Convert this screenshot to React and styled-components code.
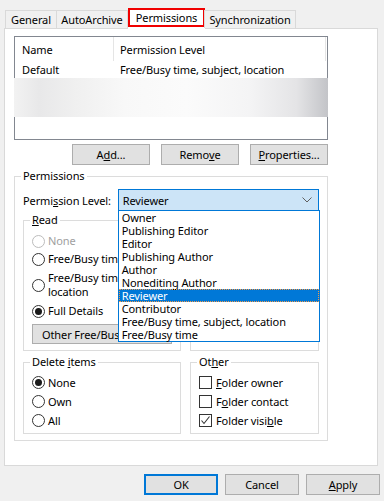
import React from "react";
import styled, { createGlobalStyle } from "styled-components";

const GlobalStyle = createGlobalStyle`
  html, body {
    margin: 0;
    background: #f0f0f0;
  }
  body {
    font-family: "Noto Sans", "Open Sans", sans-serif;
    font-size: 11px;
    letter-spacing: -0.1px;
    color: #000;
  }
`;

const Dialog = styled.div`
  width: 384px;
  height: 501px;
  box-sizing: border-box;
  padding-top: 8px;
`;

const TabStrip = styled.div`
  display: flex;
  align-items: flex-end;
  height: 20px;
  padding-left: 6px;
  position: relative;
  z-index: 1;
`;

const Tab = styled.div`
  width: ${({ $w }) => $w}px;
  height: 18px;
  box-sizing: border-box;
  margin-left: -1px;
  border: 1px solid #d9d9d9;
  border-bottom: none;
  background: #f0f0f0;
  display: flex;
  align-items: center;
  justify-content: center;
  white-space: nowrap;
`;

const ActiveTab = styled.div`
  width: 77px;
  height: 21px;
  margin-bottom: -1px;
  background: #fff;
  display: flex;
  flex-direction: column;
`;

const Highlight = styled.div`
  height: 19px;
  box-sizing: border-box;
  border: 2px solid #f00000;
  display: flex;
  align-items: center;
  justify-content: center;
  padding-bottom: 1px;
`;

const Panel = styled.div`
  margin-left: 4px;
  width: 374px;
  height: 438px;
  box-sizing: border-box;
  background: #fff;
  border: 1px solid #d9d9d9;
  padding: 7px 0 0 9px;
`;

const ListView = styled.div`
  width: 314px;
  height: 104px;
  box-sizing: border-box;
  border: 1px solid #828790;
  background: #fff;
`;

const ListHeader = styled.div`
  display: flex;
  height: 24px;
`;

const HeaderCell = styled.div`
  width: ${({ $w }) => $w}px;
  box-sizing: border-box;
  padding-left: ${({ $pad }) => $pad}px;
  border-right: 1px solid #e5e5e5;
  display: flex;
  align-items: center;
`;

const ListRow = styled.div`
  display: flex;
  height: 17px;
  align-items: center;
`;

const Cell = styled.div`
  width: ${({ $w }) => $w}px;
  padding-left: ${({ $pad }) => $pad}px;
  box-sizing: border-box;
  white-space: nowrap;
`;

const Redacted = styled.div`
  height: 39px;
  margin: 0 -1px;
  background: linear-gradient(
    90deg,
    #f2f2f2 0%,
    #e8e8e9 8%,
    #f0f0f0 20%,
    #f8f8f8 35%,
    #fbfbfb 55%,
    #f4f4f5 75%,
    #e4e4e6 90%,
    #c3c4c8 100%
  );
`;

const ButtonRow = styled.div`
  display: flex;
  justify-content: flex-end;
  gap: ${({ $gap }) => $gap}px;
  width: ${({ $w }) => ($w ? `${$w}px` : "auto")};
  margin-top: ${({ $top }) => $top}px;
  padding-right: ${({ $right }) => $right || 0}px;
`;

const Button = styled.button`
  width: ${({ $w }) => $w}px;
  height: ${({ $h }) => $h || 21}px;
  box-sizing: border-box;
  border: ${({ $default }) =>
    $default ? "2px solid #0078d7" : "1px solid #adadad"};
  background: #e1e1e1;
  font: inherit;
  letter-spacing: inherit;
  color: #000;
  padding: 0;
  display: flex;
  align-items: center;
  justify-content: center;
  white-space: nowrap;
`;

const OtherButton = styled(Button)`
  justify-content: flex-start;
  padding-left: 9px;
  margin-top: 4px;
`;

const U = styled.span`
  text-decoration: underline;
  text-underline-offset: 1px;
`;

const Group = styled.fieldset`
  margin: ${({ $top }) => $top || 0}px 0 0;
  padding: ${({ $pt }) => $pt || 0}px 8px ${({ $pb }) => $pb}px;
  border: 1px solid #dcdcdc;
  box-sizing: border-box;
  min-width: 0;
  width: ${({ $w }) => ($w ? `${$w}px` : "auto")};
`;

const Legend = styled.legend`
  padding: 0 2px;
  margin-left: -2px;
  line-height: 16px;
  white-space: nowrap;
`;

const LevelRow = styled.div`
  display: flex;
  align-items: center;
  height: 22px;
`;

const LevelLabel = styled.div`
  width: 95px;
  white-space: nowrap;
`;

const Combo = styled.div`
  position: relative;
  width: 202px;
  height: 22px;
  box-sizing: border-box;
  border: 1px solid #0078d7;
  background: #cce4f7;
  display: flex;
  align-items: center;
  justify-content: space-between;
  padding: 0 6px 0 4px;
`;

const DropList = styled.div`
  position: absolute;
  top: 20px;
  left: -1px;
  width: 202px;
  box-sizing: border-box;
  border: 1px solid #0078d7;
  background: #fff;
  z-index: 5;
`;

const DropItem = styled.div`
  height: 13px;
  line-height: 13px;
  padding-left: 3px;
  box-sizing: border-box;
  white-space: nowrap;
  background: ${({ $selected }) => ($selected ? "#0078d7" : "transparent")};
  color: ${({ $selected }) => ($selected ? "#fff" : "#000")};
  outline: ${({ $selected }) => ($selected ? "1px dotted #f29a4a" : "none")};
  outline-offset: -1px;
`;

const GroupGrid = styled.div`
  display: grid;
  grid-template-columns: 158px 129px;
  column-gap: 9px;
  row-gap: 3px;
  margin-top: 1px;
`;

const OptionRow = styled.div`
  display: flex;
  align-items: center;
  min-height: ${({ $h }) => $h}px;
  margin-top: ${({ $top }) => $top}px;
  line-height: 14px;
  color: ${({ $disabled }) => ($disabled ? "#a0a0a0" : "#000")};
  white-space: nowrap;
`;

const Radio = styled.span`
  flex: none;
  width: 13px;
  height: 13px;
  box-sizing: border-box;
  border-radius: 50%;
  border: 1px solid ${({ $disabled }) => ($disabled ? "#bcbcbc" : "#333")};
  margin-right: 3px;
  display: flex;
  align-items: center;
  justify-content: center;
  &::after {
    content: "";
    width: 7px;
    height: 7px;
    border-radius: 50%;
    background: #1a1a1a;
    display: ${({ $checked }) => ($checked ? "block" : "none")};
  }
`;

const Check = styled.span`
  flex: none;
  width: 13px;
  height: 13px;
  box-sizing: border-box;
  border: 1px solid #333;
  margin-right: 4px;
  display: flex;
  align-items: center;
  justify-content: center;
`;

const levels = [
  "Owner",
  "Publishing Editor",
  "Editor",
  "Publishing Author",
  "Author",
  "Nonediting Author",
  "Reviewer",
  "Contributor",
  "Free/Busy time, subject, location",
  "Free/Busy time",
];

function Chevron() {
  return (
    <svg width="10" height="6" viewBox="0 0 10 6">
      <polyline
        points="0.5,0.5 5,5 9.5,0.5"
        fill="none"
        stroke="#5f5f5f"
        strokeWidth="1"
      />
    </svg>
  );
}

function CheckMark() {
  return (
    <svg width="11" height="11" viewBox="0 0 11 11">
      <polyline
        points="1.5,5.5 4,8.5 9.5,1.5"
        fill="none"
        stroke="#333"
        strokeWidth="1.1"
      />
    </svg>
  );
}

function App() {
  return (
    <Dialog>
      <GlobalStyle />
      <TabStrip>
        <Tab $w={52}>General</Tab>
        <Tab $w={72}>AutoArchive</Tab>
        <ActiveTab>
          <Highlight>Permissions</Highlight>
        </ActiveTab>
        <Tab $w={92}>Synchronization</Tab>
      </TabStrip>
      <Panel>
        <ListView>
          <ListHeader>
            <HeaderCell $w={99} $pad={7}>
              Name
            </HeaderCell>
            <HeaderCell $w={212} $pad={6}>
              Permission Level
            </HeaderCell>
          </ListHeader>
          <ListRow>
            <Cell $w={99} $pad={7}>
              Default
            </Cell>
            <Cell $w={212} $pad={6}>
              Free/Busy time, subject, location
            </Cell>
          </ListRow>
          <Redacted />
        </ListView>
        <ButtonRow $gap={11} $w={314} $top={4}>
          <Button $w={78}>
            A<U>d</U>d...
          </Button>
          <Button $w={78}>
            Remo<U>v</U>e
          </Button>
          <Button $w={78}>
            <U>P</U>roperties...
          </Button>
        </ButtonRow>
        <Group $w={314} $top={3} $pt={5} $pb={6}>
          <Legend>Permissions</Legend>
          <LevelRow>
            <LevelLabel>
              Permi<U>s</U>sion Level:
            </LevelLabel>
            <Combo>
              <span>Reviewer</span>
              <Chevron />
              <DropList>
                {levels.map((level) => (
                  <DropItem key={level} $selected={level === "Reviewer"}>
                    {level}
                  </DropItem>
                ))}
              </DropList>
            </Combo>
          </LevelRow>
          <GroupGrid>
            <Group $pb={6}>
              <Legend>
                <U>R</U>ead
              </Legend>
              <OptionRow $h={18} $top={4} $disabled>
                <Radio $disabled />
                None
              </OptionRow>
              <OptionRow $h={18} $top={0}>
                <Radio />
                Free/Busy time
              </OptionRow>
              <OptionRow $h={28} $top={3}>
                <Radio />
                <span>
                  Free/Busy time, subject,
                  <br />
                  location
                </span>
              </OptionRow>
              <OptionRow $h={18} $top={3}>
                <Radio $checked />
                Full Details
              </OptionRow>
              <OtherButton $w={140} $h={20}>
                Other Free/Busy...
              </OtherButton>
            </Group>
            <Group $pb={6}>
              <Legend>
                <U>W</U>rite
              </Legend>
            </Group>
            <Group $pb={3}>
              <Legend>
                Delete <U>i</U>tems
              </Legend>
              <OptionRow $h={19} $top={3}>
                <Radio $checked />
                None
              </OptionRow>
              <OptionRow $h={19} $top={0}>
                <Radio />
                Own
              </OptionRow>
              <OptionRow $h={19} $top={0}>
                <Radio />
                All
              </OptionRow>
            </Group>
            <Group $pb={3}>
              <Legend>
                Ot<U>h</U>er
              </Legend>
              <OptionRow $h={19} $top={3}>
                <Check />
                <span>
                  <U>F</U>older owner
                </span>
              </OptionRow>
              <OptionRow $h={19} $top={0}>
                <Check />
                <span>
                  F<U>o</U>lder contact
                </span>
              </OptionRow>
              <OptionRow $h={19} $top={0}>
                <Check>
                  <CheckMark />
                </Check>
                <span>
                  Folder visi<U>b</U>le
                </span>
              </OptionRow>
            </Group>
          </GroupGrid>
        </Group>
      </Panel>
      <ButtonRow $gap={7} $top={8} $right={4}>
        <Button $w={74} $default>
          OK
        </Button>
        <Button $w={74}>Cancel</Button>
        <Button $w={74}>
          <U>A</U>pply
        </Button>
      </ButtonRow>
    </Dialog>
  );
}

export default App;
